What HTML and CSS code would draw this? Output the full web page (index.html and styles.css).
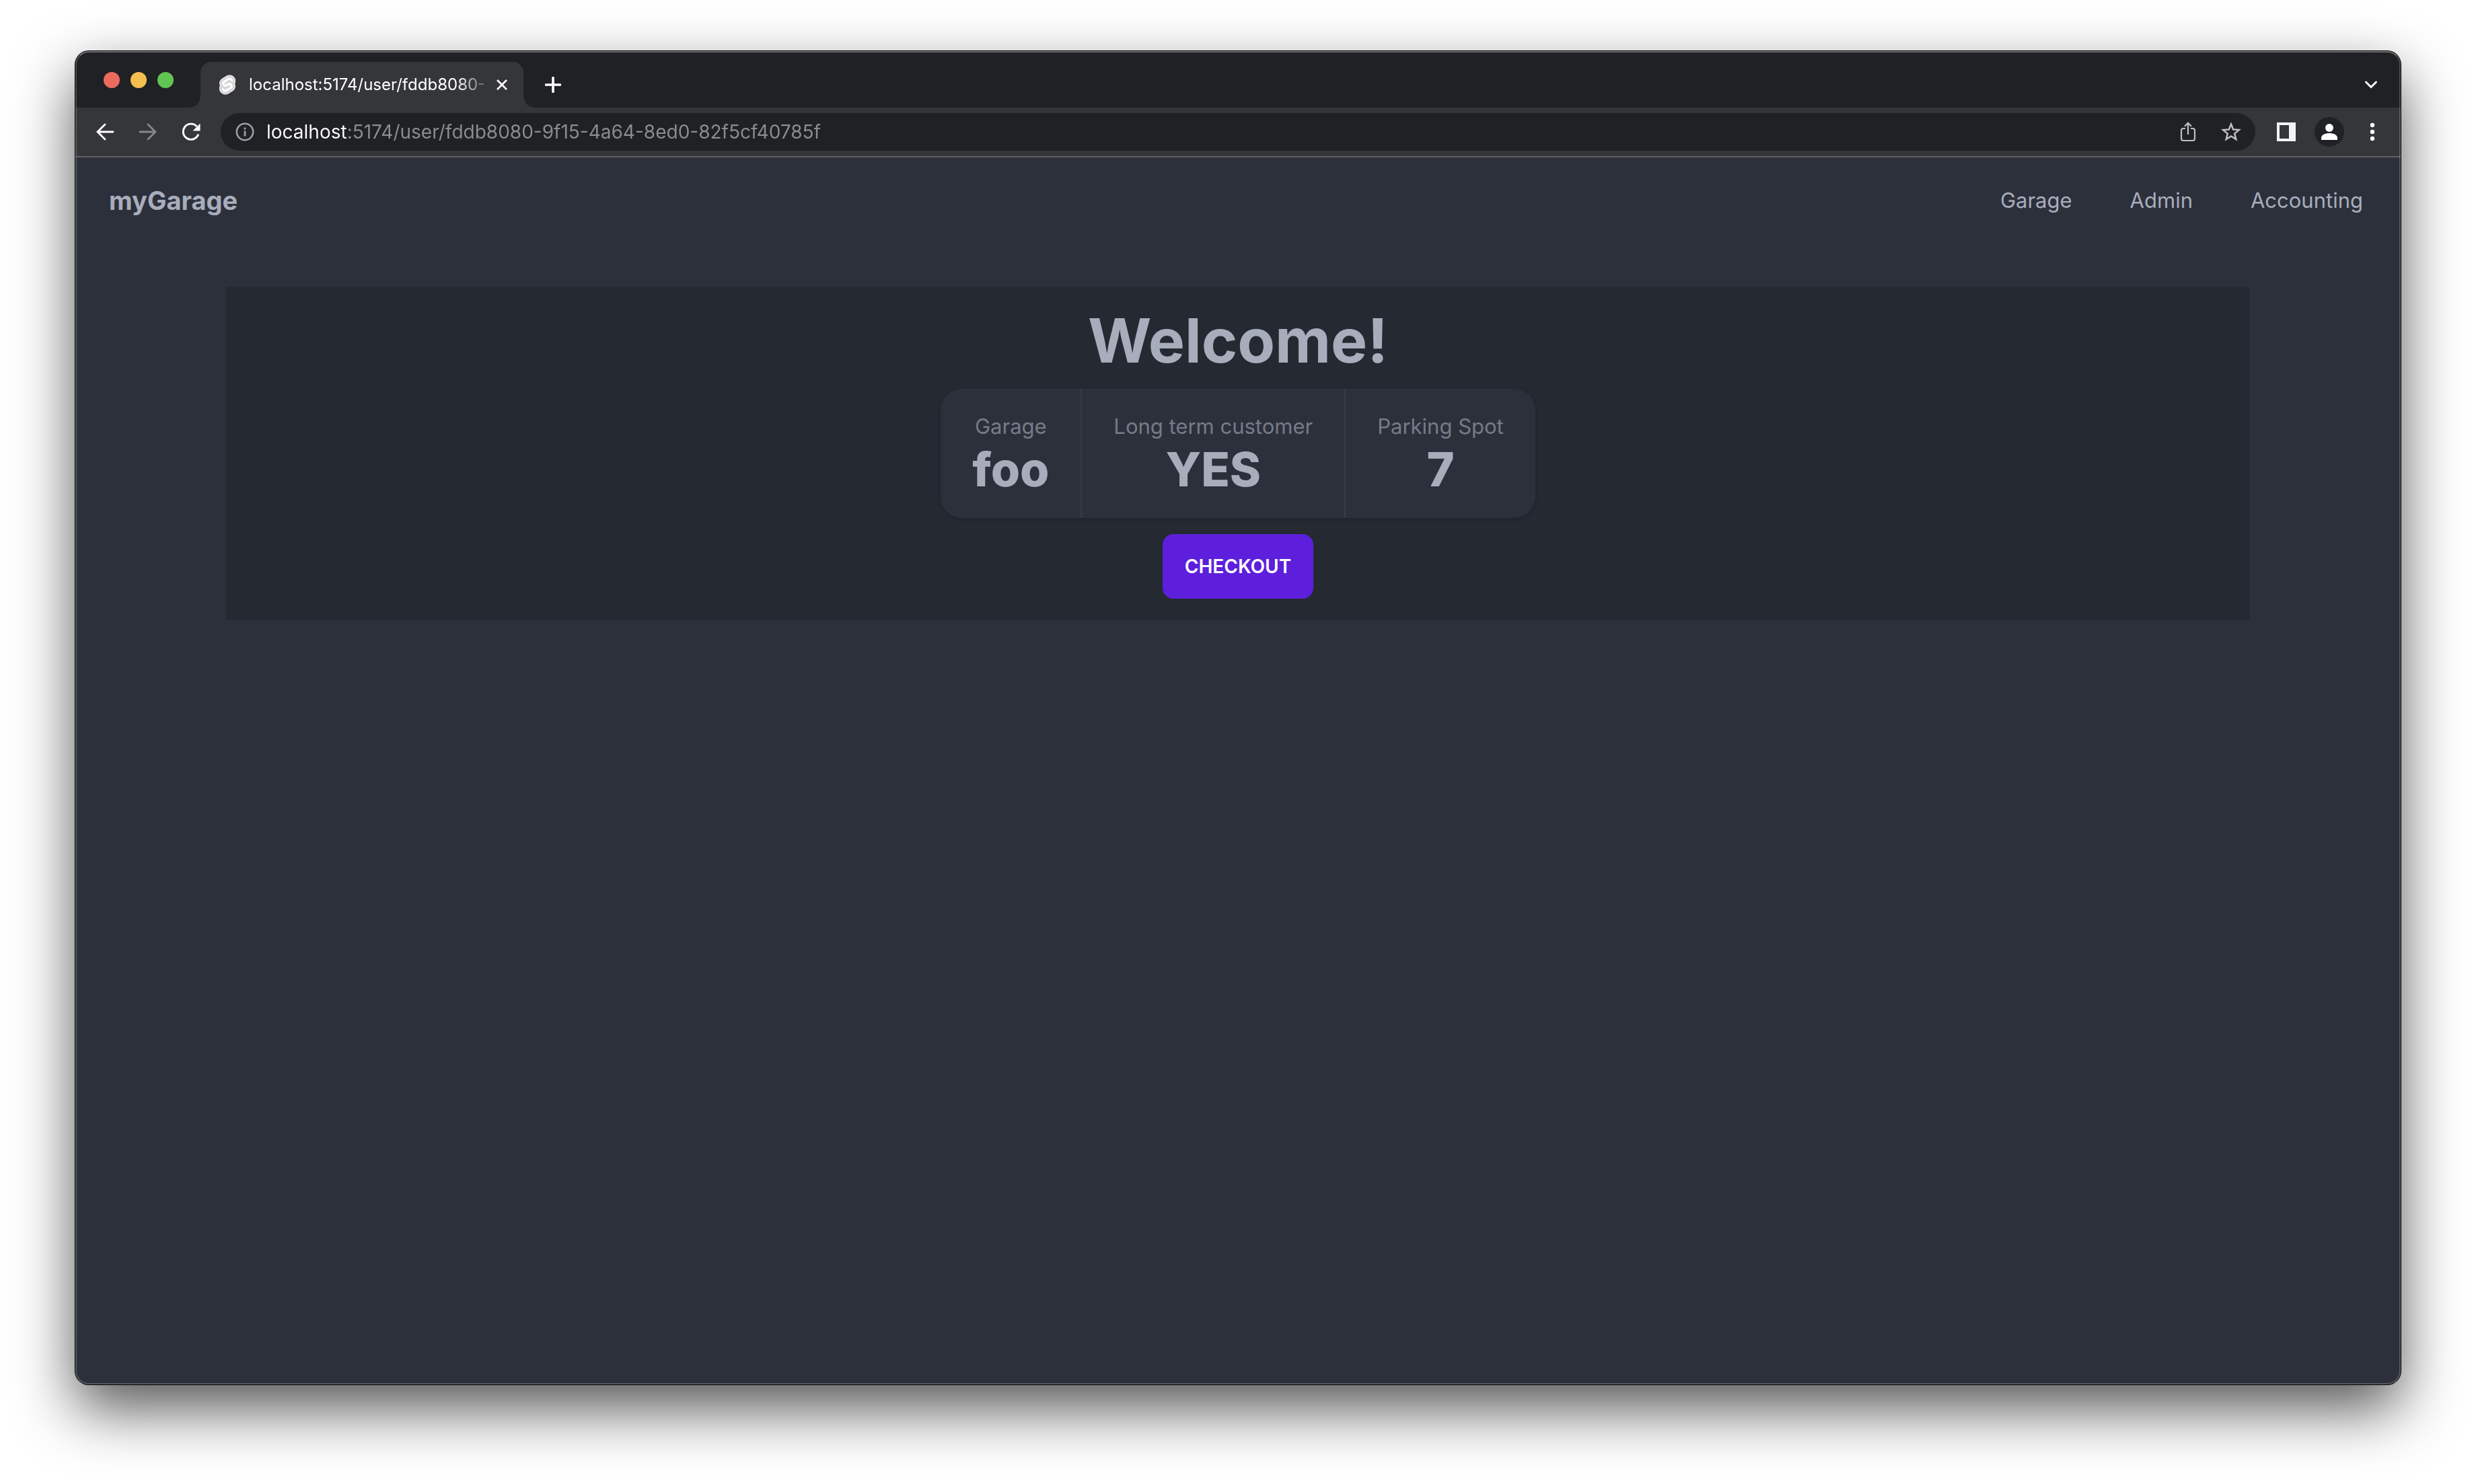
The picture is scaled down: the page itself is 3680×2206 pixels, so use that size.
FILE: index.html
```html
<!DOCTYPE html>
<html lang="en">
<head>
  <meta charset="utf-8">
  <title>myGarage</title>
  <link rel="stylesheet" href="styles.css">
</head>
<body>
  <div class="window">
    <div class="tabbar">
      <div class="lights">
        <span class="light light-close"></span>
        <span class="light light-minimize"></span>
        <span class="light light-zoom"></span>
      </div>
      <div class="tab">
        <svg class="favicon" viewBox="5 6 97 116" aria-hidden="true">
          <path d="M94.1566,22.8189c-10.4-14.8851-30.94-19.2971-45.7914-9.8348L22.2825,29.6078A29.9234,29.9234,0,0,0,8.7639,49.6506a31.5136,31.5136,0,0,0,3.1076,20.2318A30.0061,30.0061,0,0,0,7.3953,81.0653a31.8886,31.8886,0,0,0,5.4473,24.1157c10.4022,14.8865,30.9423,19.2966,45.7914,9.8348L84.7167,98.3921A29.9177,29.9177,0,0,0,98.2353,78.3493,31.5263,31.5263,0,0,0,95.13,58.117a30,30,0,0,0,4.4743-11.1824,31.88,31.88,0,0,0-5.4473-24.1157" fill="#d4d4d4" stroke="#ebebeb" stroke-width="6"/>
          <path d="M45.8171,106.5815A20.7182,20.7182,0,0,1,23.58,98.3389a19.1739,19.1739,0,0,1-3.2766-14.5025,18.1886,18.1886,0,0,1,.6233-2.4357l.4912-1.4978,1.3363.9815a33.6443,33.6443,0,0,0,10.203,5.0978l.9694.2941-.0893.9675a5.8474,5.8474,0,0,0,1.052,3.8781,6.2389,6.2389,0,0,0,6.6952,2.485,5.7449,5.7449,0,0,0,1.6021-.7041L69.27,76.281a5.4306,5.4306,0,0,0,2.4506-3.631,5.7948,5.7948,0,0,0-.9875-4.3712,6.2436,6.2436,0,0,0-6.6978-2.4864,5.7427,5.7427,0,0,0-1.6.7036l-9.9532,6.3449a19.0329,19.0329,0,0,1-5.2965,2.3259,20.7181,20.7181,0,0,1-22.2368-8.2427,19.1725,19.1725,0,0,1-3.2766-14.5024,17.9885,17.9885,0,0,1,8.13-12.0513L55.8833,23.7472a19.0038,19.0038,0,0,1,5.3-2.3287A20.7182,20.7182,0,0,1,83.42,29.6611a19.1739,19.1739,0,0,1,3.2766,14.5025,18.4,18.4,0,0,1-.6233,2.4357l-.4912,1.4978-1.3356-.98a33.6175,33.6175,0,0,0-10.2037-5.1l-.9694-.2942.0893-.9675a5.8588,5.8588,0,0,0-1.052-3.878,6.2389,6.2389,0,0,0-6.6952-2.485,5.7449,5.7449,0,0,0-1.6021.7041L37.73,51.719a5.4218,5.4218,0,0,0-2.4487,3.63,5.7862,5.7862,0,0,0,.9856,4.3717,6.2437,6.2437,0,0,0,6.6978,2.4864,5.7652,5.7652,0,0,0,1.602-.7041l9.9519-6.3425a18.978,18.978,0,0,1,5.2959-2.3278,20.7181,20.7181,0,0,1,22.2368,8.2427,19.1725,19.1725,0,0,1,3.2766,14.5024,17.9977,17.9977,0,0,1-8.13,12.0532L51.1167,104.2528a19.0038,19.0038,0,0,1-5.3,2.3287" fill="#fff"/>
        </svg>
        <span class="tab-title">localhost:5174/user/fddb8080-</span>
        <button class="icon-button" type="button" aria-label="Close tab">
          <svg width="16" height="16" viewBox="0 0 16 16"><path d="M1 1l14 14M15 1L1 15" fill="none" stroke="#fff" stroke-width="2.600"/></svg>
        </button>
      </div>
      <button class="icon-button new-tab" type="button" aria-label="New tab">
        <svg width="24" height="24" viewBox="0 0 24 24"><path d="M12 1.500v21M1.500 12h21" fill="none" stroke="#fff" stroke-width="3.600" stroke-linecap="round"/></svg>
      </button>
      <button class="icon-button tab-search" type="button" aria-label="Search tabs">
        <svg width="20" height="14" viewBox="0 0 20 14"><path d="M2.500 3l7.500 7.500L17.500 3" fill="none" stroke="#fff" stroke-width="3" stroke-linecap="round"/></svg>
      </button>
    </div>

    <div class="toolbar">
      <div class="history">
        <button class="icon-button" type="button" aria-label="Back">
          <svg width="28" height="28" viewBox="0 0 28 28"><path d="M14 3L3 14l11 11M3 14h23" fill="none" stroke="#fff" stroke-width="2.800" stroke-linecap="round"/></svg>
        </button>
        <button class="icon-button" type="button" aria-label="Forward">
          <svg width="28" height="28" viewBox="0 0 28 28"><path d="M14 3l11 11-11 11M25 14H2" fill="none" stroke="#868789" stroke-width="2.800" stroke-linecap="round"/></svg>
        </button>
        <button class="icon-button" type="button" aria-label="Reload">
          <svg width="28" height="28" viewBox="0 0 28 28"><path d="M24.800 17.600A11.600 11.600 0 1 1 22.500 6" fill="none" stroke="#fff" stroke-width="2.900"/><path d="M27.500 1.500v11h-11z" fill="#fff"/></svg>
        </button>
      </div>
      <div class="omnibox">
        <svg width="28" height="28" viewBox="0 0 28 28" aria-hidden="true"><circle cx="14" cy="14" r="12.200" fill="none" stroke="#9aa0a6" stroke-width="2.600"/><path d="M14 12.600v7.800M14 7.400v3" stroke="#9aa0a6" stroke-width="2.800"/></svg>
        <input class="address" type="text" aria-label="Address" value="localhost:5174/user/fddb8080-9f15-4a64-8ed0-82f5cf40785f">
        <button class="icon-button" type="button" aria-label="Share">
          <svg width="32" height="32" viewBox="0 0 32 32"><path d="M12 11H9a3 3 0 0 0-3 3v12a3 3 0 0 0 3 3h14a3 3 0 0 0 3-3V14a3 3 0 0 0-3-3h-3M16 20V3M11 7.800l5-5 5 5" fill="none" stroke="#bfbfbf" stroke-width="2.200"/></svg>
        </button>
        <button class="icon-button" type="button" aria-label="Bookmark this page">
          <svg width="32" height="32" viewBox="0 0 32 32"><path d="M16 4.500l3.200 8 8.600.6-6.600 5.500 2.100 8.400L16 22.500l-7.300 4.500 2.100-8.400-6.600-5.500 8.600-.6z" fill="none" stroke="#bfbfbf" stroke-width="2.500"/></svg>
        </button>
      </div>
      <div class="actions">
        <button class="icon-button" type="button" aria-label="Side panel">
          <svg width="28" height="28" viewBox="0 0 28 28"><path d="M0 0h28v28H0zM4 4v20h14V4z" fill="#f1f3f4" fill-rule="evenodd"/></svg>
        </button>
        <button class="icon-button avatar" type="button" aria-label="Profile">
          <svg width="24" height="24" viewBox="0 0 24 24"><circle cx="12" cy="6" r="6" fill="#fff"/><path d="M0 24v-3c0-4.500 6-7 12-7s12 2.500 12 7v3z" fill="#fff"/></svg>
        </button>
        <button class="icon-button" type="button" aria-label="Menu">
          <svg width="8" height="28" viewBox="0 0 8 28"><circle cx="4" cy="4" r="3.200" fill="#fff"/><circle cx="4" cy="14" r="3.200" fill="#fff"/><circle cx="4" cy="24" r="3.200" fill="#fff"/></svg>
        </button>
      </div>
    </div>

    <header class="navbar">
      <a class="brand" href="#">myGarage</a>
      <nav class="menu">
        <a href="#garage">Garage</a>
        <a href="#admin">Admin</a>
        <a href="#accounting">Accounting</a>
      </nav>
    </header>

    <main class="panel">
      <h1 class="welcome">Welcome!</h1>
      <dl class="stats">
        <div class="stat"><dt>Garage</dt><dd>foo</dd></div>
        <div class="stat"><dt>Long term customer</dt><dd>YES</dd></div>
        <div class="stat"><dt>Parking Spot</dt><dd>7</dd></div>
      </dl>
      <button class="checkout" type="button">CHECKOUT</button>
    </main>
  </div>
</body>
</html>
```
FILE: styles.css
```css
*,
*::before,
*::after {
  box-sizing: border-box;
}

body {
  margin: 0;
  padding: 76px 112px 148px;
  background: #fff;
  color: #a8adbb;
  font-family: Inter, "Liberation Sans", sans-serif;
}

a {
  color: inherit;
  text-decoration: none;
}

button {
  padding: 0;
  border: 0;
  background: none;
  font-family: inherit;
}

svg {
  display: block;
  flex: none;
}

.window {
  position: relative;
  min-height: calc(100vh - 224px);
  border-radius: 20px;
  background: #2c303b;
  box-shadow: 0 0 0 1px #000, 0 36px 88px rgba(0, 0, 0, 0.67);
}

/* Light rim that macOS draws inside the window edge */
.window::after {
  content: "";
  position: absolute;
  inset: 0;
  border: 2px solid rgba(255, 255, 255, 0.2);
  border-top-color: rgba(255, 255, 255, 0.36);
  border-radius: 20px;
  pointer-events: none;
}

/* Tab strip */
.tabbar {
  display: flex;
  align-items: flex-end;
  height: 84px;
  padding: 0 32px 0 42px;
  border-radius: 20px 20px 0 0;
  background: #202124;
}

.lights {
  display: flex;
  gap: 16px;
  align-items: center;
  height: 82px;
  margin-right: 40px;
}

.light {
  width: 24px;
  height: 24px;
  border-radius: 50%;
}

.light-close {
  background: #ed6a5e;
}

.light-minimize {
  background: #f5bf4f;
}

.light-zoom {
  background: #61c554;
}

.tab {
  position: relative;
  display: flex;
  align-items: center;
  width: 480px;
  height: 68px;
  padding: 0 24px 0 28px;
  border-radius: 16px 16px 0 0;
  background: #35363a;
}

/* Outward curves at the foot of the tab */
.tab::before,
.tab::after {
  content: "";
  position: absolute;
  bottom: 0;
  width: 16px;
  height: 16px;
}

.tab::before {
  right: 100%;
  background: radial-gradient(circle at 0 0, transparent 15px, #35363a 16px);
}

.tab::after {
  left: 100%;
  background: radial-gradient(circle at 100% 0, transparent 15px, #35363a 16px);
}

.favicon {
  width: 24px;
  height: 30px;
}

.tab-title {
  flex: 1;
  margin: 0 16px 0 20px;
  overflow: hidden;
  color: #fff;
  font-size: 24px;
  line-height: 32px;
  white-space: nowrap;
  mask-image: linear-gradient(to left, rgba(0, 0, 0, 0.2), #000 44px);
}

.icon-button {
  display: flex;
  align-items: center;
  justify-content: center;
}

.new-tab {
  height: 68px;
  margin-left: 32px;
}

.tab-search {
  width: 24px;
  height: 68px;
  margin-left: auto;
}

/* Toolbar */
.toolbar {
  display: flex;
  gap: 24px;
  align-items: center;
  height: 74px;
  padding: 0 20px 0 24px;
  border-bottom: 2px solid #5f6164;
  background: #35363a;
}

.history {
  display: flex;
  gap: 24px;
}

.history .icon-button {
  width: 40px;
  height: 44px;
}

.omnibox {
  display: flex;
  flex: 1;
  align-items: center;
  height: 56px;
  padding: 0 20px 0 22px;
  border-radius: 28px;
  background: #202124;
}

.address {
  flex: 1;
  min-width: 0;
  height: 40px;
  margin-left: 18px;
  padding: 0;
  border: 0;
  outline: 0;
  background: linear-gradient(to right, #fff 120px, #8b8d90 120px);
  background-clip: text;
  color: transparent;
  font-family: inherit;
  font-size: 28px;
}

.omnibox .icon-button {
  margin-left: 32px;
}

.actions {
  display: flex;
  gap: 20px;
}

.actions .icon-button {
  width: 44px;
  height: 44px;
}

.actions .avatar {
  border-radius: 50%;
  background: #202124;
}

/* Page */
.navbar {
  display: flex;
  align-items: center;
  justify-content: space-between;
  height: 128px;
  padding: 0 56px 0 50px;
}

.brand {
  font-size: 38px;
  font-weight: 700;
  line-height: 48px;
}

.menu {
  display: flex;
  gap: 86px;
  font-size: 31px;
  line-height: 48px;
}

.panel {
  display: flex;
  flex-direction: column;
  gap: 24px;
  align-items: center;
  margin: 64px 224px 0;
  padding: 32px;
  border-radius: 2px;
  background: #252932;
}

.welcome {
  margin: 0;
  font-size: 91px;
  font-weight: 700;
  line-height: 96px;
}

.stats {
  display: flex;
  margin: 0;
  border-radius: 32px;
  background: #2c303b;
  box-shadow: 0 2px 6px rgba(0, 0, 0, 0.1), 0 2px 4px rgba(0, 0, 0, 0.06);
}

.stat {
  padding: 32px 47px;
  text-align: center;
}

.stat + .stat {
  border-left: 2px solid #383c47;
}

.stat dt {
  color: #777b87;
  font-size: 31px;
  line-height: 48px;
}

.stat dd {
  margin: 0;
  font-size: 70px;
  font-weight: 800;
  line-height: 80px;
}

.checkout {
  height: 96px;
  padding: 0 33px;
  border-radius: 16px;
  background: #5d1fdc;
  color: #fff;
  font-size: 28px;
  font-weight: 600;
}
```
